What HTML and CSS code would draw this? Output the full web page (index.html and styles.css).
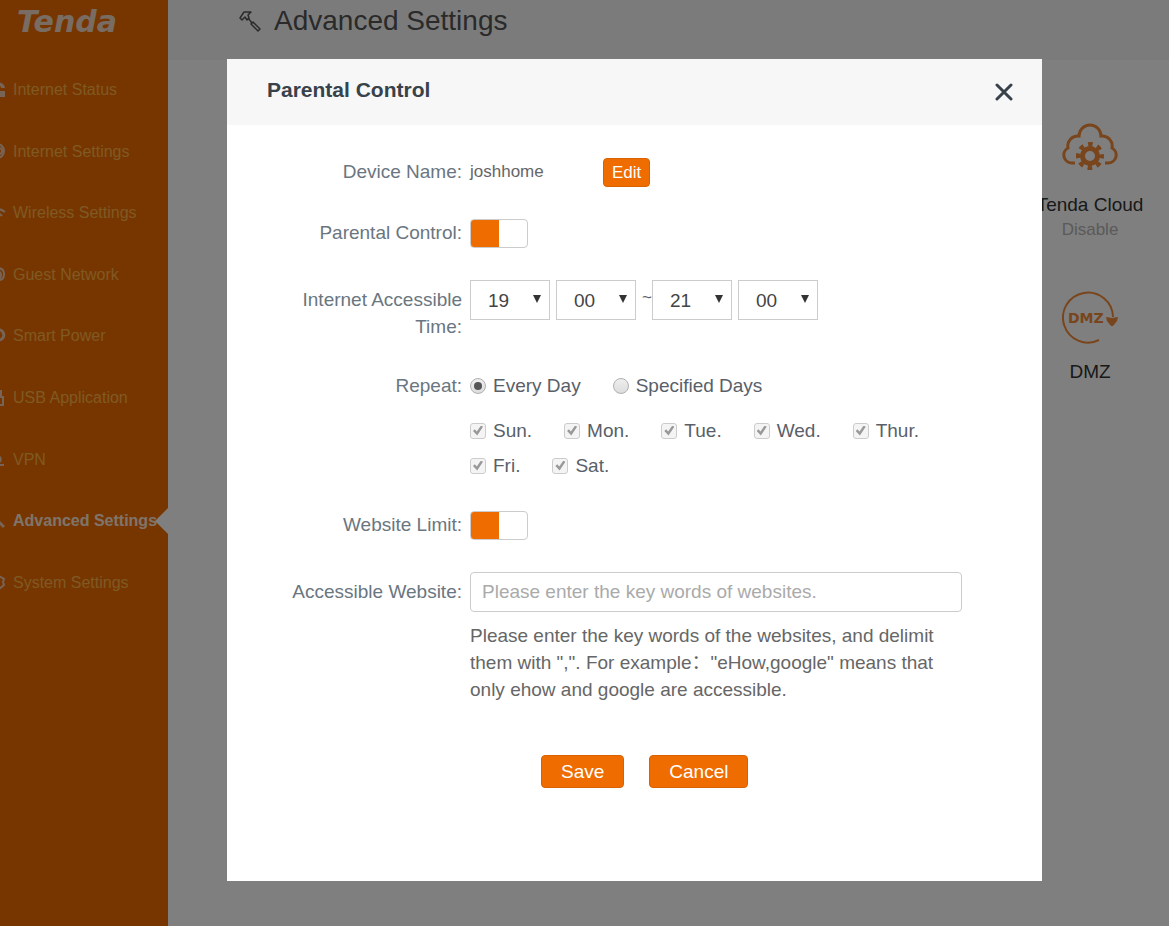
FILE: index.html
```html
<!DOCTYPE html>
<html lang="en">
<head>
    <meta charset="UTF-8">
    <title>Tenda - Parental Control</title>
    <link rel="stylesheet" href="styles.css">
</head>
<body>

<div class="page">
    <aside class="sidebar">
        <a href="#" class="logo">Tenda</a>
        <nav class="nav">
            <a href="#" class="nav-link">
                <svg class="nav-icon" viewBox="0 0 18 18"><path d="M1 7a8 6 0 0 1 16 0h-4a4 3 0 0 0-8 0zM1 10h16v6H1z" fill="currentColor"/></svg>
                Internet Status
            </a>
            <a href="#" class="nav-link">
                <svg class="nav-icon" viewBox="0 0 18 18"><g fill="none" stroke="currentColor" stroke-width="2"><circle cx="9" cy="9" r="7"/><circle cx="11" cy="9" r="3"/></g></svg>
                Internet Settings
            </a>
            <a href="#" class="nav-link">
                <svg class="nav-icon" viewBox="0 0 18 18"><g fill="none" stroke="currentColor" stroke-width="2"><path d="M1 8q8-6 16 0"/><path d="M4 12q5-5 10 0"/></g></svg>
                Wireless Settings
            </a>
            <a href="#" class="nav-link">
                <svg class="nav-icon" viewBox="0 0 18 18"><g fill="none" stroke="currentColor" stroke-width="2"><path d="M9 3q7 0 7 6t-5 6"/><path d="M9 6q4 0 4 4t-3 5"/></g></svg>
                Guest Network
            </a>
            <a href="#" class="nav-link">
                <svg class="nav-icon" viewBox="0 0 18 18"><path d="M9 3a5 5 0 0 1 3 10" fill="none" stroke="currentColor" stroke-width="3"/></svg>
                Smart Power
            </a>
            <a href="#" class="nav-link">
                <svg class="nav-icon" viewBox="0 0 18 18"><path d="M8 8h7v8H8zM10 8V2h3v6" fill="none" stroke="currentColor" stroke-width="2"/></svg>
                USB Application
            </a>
            <a href="#" class="nav-link">
                <svg class="nav-icon" viewBox="0 0 18 18"><path d="M3 15h13M10 5q4 3 2 7" fill="none" stroke="currentColor" stroke-width="2"/></svg>
                VPN
            </a>
            <a href="#" class="nav-link active">
                <svg class="nav-icon" viewBox="0 0 18 18"><path d="M6 5l10 10" fill="none" stroke="currentColor" stroke-width="3"/></svg>
                Advanced Settings
            </a>
            <a href="#" class="nav-link">
                <svg class="nav-icon" viewBox="0 0 18 18"><path d="M11 3l5 3-1 3 1 3-5 4" fill="none" stroke="currentColor" stroke-width="2"/></svg>
                System Settings
            </a>
        </nav>
    </aside>

    <main class="main">
        <header class="main-header">
            <svg class="hammer" viewBox="0 0 22 22">
                <g fill="none" stroke="currentColor" stroke-width="1.5" stroke-linejoin="round">
                    <path d="M1 8L5 2 12 2 9 5 10 8 8 10 6 7 3 10z"/>
                    <path d="M9 8l4 5"/>
                    <path d="M12 14l2-2 7 7-2 2z"/>
                </g>
            </svg>
            <h1>Advanced Settings</h1>
        </header>
        <div class="tiles">
            <a href="#" class="tile">
                <svg class="tile-icon" viewBox="0 0 56 54">
                    <path d="M13 40H10A8 8 0 0 1 6 25A10 10 0 0 1 17 13A11 11 0 0 1 39 13A10 10 0 0 1 50 25A8 8 0 0 1 46 40H43" fill="none" stroke="currentColor" stroke-width="3"/>
                    <circle cx="28" cy="33" r="7.5" fill="none" stroke="currentColor" stroke-width="5"/>
                    <circle cx="28" cy="33" r="11.5" fill="none" stroke="currentColor" stroke-width="5" stroke-dasharray="4.5 4.53" stroke-dashoffset="2.25"/>
                </svg>
                <span class="tile-name">Tenda Cloud</span>
                <span class="tile-state">Disable</span>
            </a>
            <a href="#" class="tile">
                <svg class="tile-icon" viewBox="0 0 56 54">
                    <path d="M37 50A25 25 0 1 1 51 27" fill="none" stroke="currentColor" stroke-width="2"/>
                    <path d="M44 27l6 1 6-1-1 4-4 5h-2l-4-5z" fill="currentColor"/>
                    <text x="6" y="33" class="dmz-text">DMZ</text>
                </svg>
                <span class="tile-name">DMZ</span>
            </a>
        </div>
    </main>
</div>

<div class="overlay">
    <section class="modal" role="dialog" aria-labelledby="modal-title">
        <header class="modal-head">
            <h2 id="modal-title">Parental Control</h2>
            <button type="button" class="close" aria-label="Close">
                <svg viewBox="0 0 18 18" width="18" height="18"><path d="M2 2l14 14M16 2L2 16" stroke="currentColor" stroke-width="3" stroke-linecap="round"/></svg>
            </button>
        </header>

        <form class="modal-body">
            <div class="row">
                <span class="label">Device Name:</span>
                <div class="control device">
                    <span class="device-name">joshhome</span>
                    <button type="button" class="btn btn-small">Edit</button>
                </div>
            </div>

            <div class="row">
                <label class="label" for="parental">Parental Control:</label>
                <div class="control">
                    <input type="checkbox" id="parental" class="toggle" checked>
                </div>
            </div>

            <div class="row row-tall">
                <label class="label" for="start-hour">Internet Accessible Time:</label>
                <div class="control time">
                    <span class="select"><select id="start-hour"><option>19</option></select></span>
                    <span class="select"><select aria-label="Start minute"><option>00</option></select></span>
                    <span class="tilde">~</span>
                    <span class="select"><select aria-label="End hour"><option>21</option></select></span>
                    <span class="select"><select aria-label="End minute"><option>00</option></select></span>
                </div>
            </div>

            <div class="row">
                <span class="label">Repeat:</span>
                <div class="control">
                    <div class="choices">
                        <label><input type="radio" name="repeat" checked>Every Day</label>
                        <label><input type="radio" name="repeat">Specified Days</label>
                    </div>
                    <div class="choices days">
                        <label><input type="checkbox" class="day" checked disabled>Sun.</label>
                        <label><input type="checkbox" class="day" checked disabled>Mon.</label>
                        <label><input type="checkbox" class="day" checked disabled>Tue.</label>
                        <label><input type="checkbox" class="day" checked disabled>Wed.</label>
                        <label><input type="checkbox" class="day" checked disabled>Thur.</label>
                        <label><input type="checkbox" class="day" checked disabled>Fri.</label>
                        <label><input type="checkbox" class="day" checked disabled>Sat.</label>
                    </div>
                </div>
            </div>

            <div class="row">
                <label class="label" for="limit">Website Limit:</label>
                <div class="control">
                    <input type="checkbox" id="limit" class="toggle" checked>
                </div>
            </div>

            <div class="row row-tall">
                <label class="label" for="website">Accessible Website:</label>
                <div class="control">
                    <input type="text" id="website" class="text-input" placeholder="Please enter the key words of websites.">
                    <p class="help">Please enter the key words of the websites, and delimit them with ",". For example："eHow,google" means that only ehow and google are accessible.</p>
                </div>
            </div>

            <div class="actions">
                <button type="button" class="btn">Save</button>
                <button type="button" class="btn">Cancel</button>
            </div>
        </form>
    </section>
</div>

</body>
</html>
```
FILE: styles.css
```css
* { box-sizing: border-box; }

body {
    margin: 0;
    font-family: "Liberation Sans", Arial, "Noto Sans CJK SC", sans-serif;
    font-size: 19px;
    line-height: 27px;
    color: #596069;
    background-color: #fff;
}

a {
    color: inherit;
    text-decoration: none;
}

button, input, select {
    font-family: inherit;
    font-size: 19px;
    margin: 0;
}

.page {
    display: flex;
    min-height: 100vh;
}

/* sidebar */
.sidebar {
    flex: none;
    width: 168px;
    background-color: #ee6c00;
    overflow: hidden;
}

.logo {
    display: block;
    padding: 7px 0 0 17px;
    height: 59px;
    font-family: "DejaVu Sans", Verdana, sans-serif;
    font-size: 30px;
    line-height: 30px;
    font-weight: bold;
    font-style: italic;
    color: #f2d9c4;
}

.nav {
    display: grid;
    grid-auto-rows: 1fr;
    height: 554px;
}

.nav-link {
    display: flex;
    align-items: center;
    gap: 7px;
    margin-left: -12px;
    font-size: 16px;
    white-space: nowrap;
    color: #ffb347;
}

.nav-icon {
    flex: none;
    width: 18px;
    height: 18px;
    color: #f0c8ac;
}

.nav-link.active {
    position: relative;
    font-weight: bold;
    color: #ffe9d8;
}

/* arrow pointing at the current item */
.nav-link.active::after {
    content: "";
    position: absolute;
    right: 0;
    border: 13px solid transparent;
    border-left-width: 0;
    border-right-color: #fff;
}

/* page behind the dialog */
.main { flex: 1; }

.main-header {
    display: flex;
    align-items: center;
    gap: 13px;
    height: 60px;
    padding: 0 0 19px 71px;
    background-color: #f7f7f7;
    color: #555;
}

.main-header h1 {
    margin: 0;
    font-size: 28px;
    font-weight: normal;
}

.hammer {
    width: 22px;
    height: 22px;
}

.tiles {
    display: flex;
    flex-direction: column;
    align-items: flex-end;
    gap: 48px;
    padding-top: 63px;
}

.tile {
    display: flex;
    flex-direction: column;
    align-items: center;
    width: 158px;
}

.tile-icon {
    width: 56px;
    height: 54px;
    margin-bottom: 14px;
    color: #f08a38;
}

.dmz-text {
    font-family: "DejaVu Sans", Verdana, sans-serif;
    font-size: 14px;
    font-weight: bold;
    fill: currentColor;
}

.tile-name { color: #333; }

.tile-state {
    font-size: 17px;
    line-height: 24px;
    color: #b4b4b4;
}

/* dialog */
.overlay {
    position: absolute;
    top: 0;
    left: 0;
    width: 100%;
    min-height: 100%;
    display: flex;
    justify-content: center;
    align-items: flex-start;
    padding: 59px 0 44px 100px;
    background-color: rgba(0, 0, 0, 0.5);
}

.modal {
    width: 100%;
    max-width: 815px;
    background-color: #fff;
}

.modal-head {
    display: flex;
    justify-content: space-between;
    align-items: center;
    height: 66px;
    padding: 0 29px 0 40px;
    background-color: #f7f7f7;
    color: #38424b;
}

.modal-head h2 {
    margin: 0;
    padding-bottom: 6px;
    font-size: 21px;
}

.close {
    display: flex;
    padding: 0;
    border: none;
    background: none;
    color: #38424b;
}

.modal-body {
    display: flex;
    flex-direction: column;
    gap: 32px;
    padding: 33px 80px 93px 60px;
}

.row {
    display: flex;
    gap: 8px;
}

.label {
    flex: none;
    width: 175px;
    text-align: right;
    color: #6a7680;
}

.row-tall .label { padding-top: 6px; }

.control { flex: 1; }

.device { display: flex; }

.device-name {
    width: 133px;
    font-size: 17px;
    color: #666;
}

.btn {
    height: 33px;
    padding: 0 19px;
    border: 1px solid #d96200;
    border-radius: 4px;
    background-color: #ee6c00;
    color: #fff;
}

.btn-small {
    height: 29px;
    padding: 0 8px;
    font-size: 17px;
}

.toggle {
    appearance: none;
    display: block;
    width: 58px;
    height: 29px;
    border: 1px solid #ccc;
    border-radius: 4px;
    background: linear-gradient(to left, #ee6c00 50%, #fff 50%);
}

.toggle:checked { background: linear-gradient(to right, #ee6c00 50%, #fff 50%); }

.time {
    display: flex;
    align-items: flex-start;
}

.select {
    position: relative;
    margin-right: 6px;
}

.select select {
    appearance: none;
    display: block;
    width: 80px;
    height: 40px;
    padding: 0 17px;
    border: 1px solid #ccc;
    border-radius: 0;
    background-color: #fff;
    color: #444;
}

.select::after {
    content: "";
    position: absolute;
    top: 15px;
    right: 9px;
    border: 4px solid transparent;
    border-top: 8px solid #333;
    border-bottom: 0;
    pointer-events: none;
}

.tilde {
    width: 10px;
    font-size: 17px;
    line-height: 36px;
}

.choices {
    display: flex;
    flex-wrap: wrap;
    gap: 8px 32px;
}

.choices label {
    display: flex;
    align-items: center;
    gap: 7px;
}

.days { margin-top: 18px; }

.choices input {
    appearance: none;
    display: grid;
    place-items: center;
    width: 16px;
    height: 16px;
    border: 1px solid #b0b0b0;
    border-radius: 50%;
    background: linear-gradient(#eee, #ddd);
}

.choices input:checked::before {
    content: "";
    width: 8px;
    height: 8px;
    border-radius: 50%;
    background-color: #555;
}

.choices .day {
    border-color: #ccc;
    border-radius: 3px;
    background: #f4f4f4;
}

.choices .day:checked::before {
    width: 10px;
    height: 10px;
    border-radius: 0;
    background-color: #999;
    clip-path: polygon(0 55%, 18% 38%, 38% 60%, 80% 0, 100% 12%, 42% 100%);
}

.text-input {
    display: block;
    width: 100%;
    height: 40px;
    padding: 0 11px;
    border: 1px solid #ccc;
    border-radius: 4px;
    color: #444;
}

.text-input::placeholder { color: #aaa; }

.help {
    margin: 10px 0 0;
    color: #666;
}

.actions {
    display: flex;
    gap: 25px;
    margin-top: 20px;
    padding-left: 254px;
}
```
